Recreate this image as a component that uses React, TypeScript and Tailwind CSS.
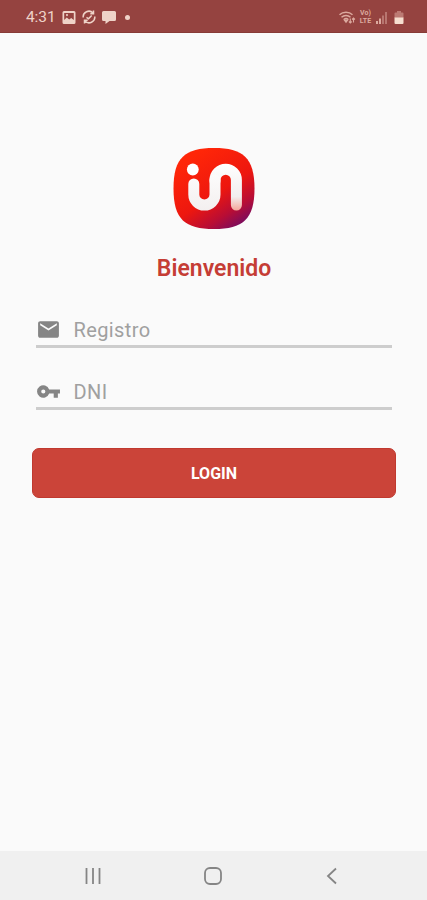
import React, { useState } from "react";

interface FieldProps {
  label: string;
  type: string;
  value: string;
  onChange: (value: string) => void;
  children: React.ReactNode;
}

const Field: React.FC<FieldProps> = ({ label, type, value, onChange, children }) => (
  <label className="flex h-[38px] items-center border-b-[3px] border-[#cdcdcd] pt-[4px]">
    {children}
    <input
      type={type}
      value={value}
      placeholder={label}
      onChange={(e) => onChange(e.target.value)}
      className="ml-[12.5px] min-w-0 flex-1 bg-transparent text-[20px] leading-6 tracking-[0.4px] text-[#555] outline-none placeholder:text-[#a0a0a0]"
    />
  </label>
);

const StatusBar = () => (
  <header className="flex h-[33px] items-center border-b border-[#873b37] bg-[#954340] pl-[26px] pr-[23px] pt-[2px] text-[#efd3c8]">
    <span className="pt-px text-[15.5px] leading-none tracking-[-0.1px]">4:31</span>

    {/* Notifications */}
    <svg className="ml-[6px] h-[13px] w-[14px]" viewBox="0 0 14 13">
      <path
        fill="currentColor"
        fillRule="evenodd"
        d="M2 0h10a1.500 1.500 0 0 1 1.500 1.500v10A1.500 1.500 0 0 1 12 13H2A1.500 1.500 0 0 1 .5 11.500v-10A1.500 1.500 0 0 1 2 0ZM2.200 2v7l2.500-2.500 2.500 2 2-1.500 2.600 2V2ZM5 3a1 1 0 1 1-.01 0Z"
      />
    </svg>
    <svg className="ml-[6px] h-[14px] w-[14px]" viewBox="0 0 14 14" fill="none" stroke="currentColor" strokeWidth="1.5">
      <path d="M1.200 7.500A5.700 5.700 0 0 1 11 3M12.800 6.500A5.700 5.700 0 0 1 3 11M11.500.5V3.800H8.300M2.500 13.500v-3.300h3.200" />
      <path d="M4.500 7.300l2 1.500 3.200-3.300" />
    </svg>
    <svg className="ml-[6px] h-[13px] w-[14px]" viewBox="0 0 14 13">
      <path fill="currentColor" d="M1.500 0h11A1.500 1.500 0 0 1 14 1.500v7a1.500 1.500 0 0 1-1.500 1.500H7.500L3.500 13v-3h-2A1.500 1.500 0 0 1 0 8.500v-7A1.500 1.500 0 0 1 1.500 0Z" />
    </svg>
    <span className="ml-[9px] size-[5px] rounded-full bg-current" />

    {/* Connectivity and battery */}
    <div className="ml-auto flex items-center text-[#dcaa9f]">
      <svg className="h-[13px] w-[17px]" viewBox="0 0 17 13" fill="none" stroke="currentColor" strokeWidth="1.4">
        <path d="M.5 3.800C4 .3 10 .3 13.500 3.800M2.500 6.200c2.500-2.300 6.500-2.300 9 0M4.800 8.500c1.500-1.300 3-1.300 4.500 0" />
        <path d="M7 11 5.600 9.200h2.800Z" fill="currentColor" />
        <path d="M11.300 7.500V12M9.900 10.500l1.400 1.500 1.400-1.500M14.500 11.500V7M13.100 8.500 14.500 7l1.400 1.500" strokeWidth="1.1" />
      </svg>
      <div className="ml-[2px] flex w-[15px] flex-col items-center text-[7px] font-bold leading-[8px] tracking-[0.1px]">
        <span>Vo)</span>
        <span>LTE</span>
      </div>
      <svg className="ml-[3px] h-[13px] w-[12px]" viewBox="0 0 12 13" fill="currentColor">
        <path d="M0 10h2v3H0ZM3 7.500h2V13H3Z" />
        <path d="M6 4.500h2V13H6ZM9 1h2v12H9Z" opacity=".5" />
      </svg>
      <svg className="ml-[6px] h-[13px] w-[10px]" viewBox="0 0 10 13">
        <path d="M3 0h4v1.500h1.500a1 1 0 0 1 1 1V7h-9V2.500a1 1 0 0 1 1-1H3Z" fill="currentColor" opacity=".55" />
        <path d="M.5 6.500h9V12a1 1 0 0 1-1 1h-7a1 1 0 0 1-1-1Z" fill="#f6dfd0" />
      </svg>
    </div>
  </header>
);

const Logo = () => (
  <svg className="size-[82px]" viewBox="0 0 82 82">
    <defs>
      <linearGradient id="tile" x1="0.25" y1="0.1" x2="0.85" y2="1">
        <stop offset="0" stopColor="#ff2608" />
        <stop offset="0.5" stopColor="#ed170f" />
        <stop offset="0.76" stopColor="#b80d35" />
        <stop offset="1" stopColor="#6a0b68" />
      </linearGradient>
      <linearGradient id="mark" gradientUnits="userSpaceOnUse" x1="0" y1="15" x2="0" y2="63">
        <stop offset="0" stopColor="#fff" />
        <stop offset="0.7" stopColor="#f2eeee" />
        <stop offset="1" stopColor="#f6a396" />
      </linearGradient>
      <linearGradient id="hook" gradientUnits="userSpaceOnUse" x1="0" y1="15" x2="0" y2="63">
        <stop offset="0" stopColor="#fff" />
        <stop offset="1" stopColor="#f3efef" />
      </linearGradient>
    </defs>
    <path fill="url(#tile)" d="M41 0C70 0 81.500 10 81.500 40.500S70 81 41 81 .5 71.500.5 40.500 12 0 41 0Z" />
    <g fill="none" strokeWidth="11" strokeLinecap="round">
      <path stroke="url(#mark)" d="M42 33v-1a10.700 10.700 0 0 1 21.400 0v25" />
      <path stroke="url(#hook)" d="M20.800 36v10.500a10.600 10.600 0 0 0 21.200 0V32" />
    </g>
    <circle cx="19.8" cy="21.5" r="5.9" fill="#fff" />
  </svg>
);

export default function App() {
  const [registro, setRegistro] = useState("");
  const [dni, setDni] = useState("");

  return (
    <div className="flex h-screen flex-col bg-[#fafafa] font-[Roboto,sans-serif]">
      <StatusBar />

      {/* Login form */}
      <main className="flex flex-1 flex-col pl-8 pr-[31px] pt-[115px]">
        <div className="flex flex-col items-center">
          <Logo />
          <h1 className="mt-[24px] text-[23px] font-semibold leading-[30px] text-[#c53d35]">Bienvenido</h1>
        </div>

        <form onSubmit={(e) => e.preventDefault()}>
          <div className="mt-[26px] flex flex-col gap-[24px] px-1">
            <Field label="Registro" type="text" value={registro} onChange={setRegistro}>
              <svg className="size-[25px] text-[#858585]" viewBox="0 0 24 24" fill="currentColor">
                <path d="M20 4H4c-1.100 0-2 .9-2 2v12c0 1.100.9 2 2 2h16c1.100 0 2-.9 2-2V6c0-1.100-.9-2-2-2Zm0 4-8 5-8-5V6l8 5 8-5Z" />
              </svg>
            </Field>
            <Field label="DNI" type="password" value={dni} onChange={setDni}>
              <svg className="size-[25px] text-[#858585]" viewBox="0 0 24 24" fill="currentColor">
                <path d="M12.650 10A6 6 0 1 0 12.650 14H17v4h4v-4h2v-4ZM7 14a2 2 0 1 1 0-4 2 2 0 0 1 0 4Z" />
              </svg>
            </Field>
          </div>
          <button
            type="submit"
            className="mt-[38px] h-[50px] w-full rounded-[7px] border border-[#c0392f] bg-[#cb4439] pt-[2px] text-[16px] font-bold text-white"
          >
            LOGIN
          </button>
        </form>
      </main>

      {/* Android navigation */}
      <nav className="flex h-[49px] items-center justify-between bg-[#f0f0f0] pl-[84px] pr-[86px] text-[#858585]">
        <svg className="size-[18px]" viewBox="0 0 18 18" stroke="currentColor" strokeWidth="1.8">
          <path d="M2.500 1v16M9 1v16M15.500 1v16" />
        </svg>
        <svg className="size-[18px]" viewBox="0 0 18 18" fill="none" stroke="currentColor" strokeWidth="1.8">
          <rect x="1" y="1" width="16" height="16" rx="5" />
        </svg>
        <svg className="size-[18px]" viewBox="0 0 18 18" fill="none" stroke="currentColor" strokeWidth="1.8">
          <path d="M13 1.500 5 9l8 7.500" />
        </svg>
      </nav>
    </div>
  );
}
